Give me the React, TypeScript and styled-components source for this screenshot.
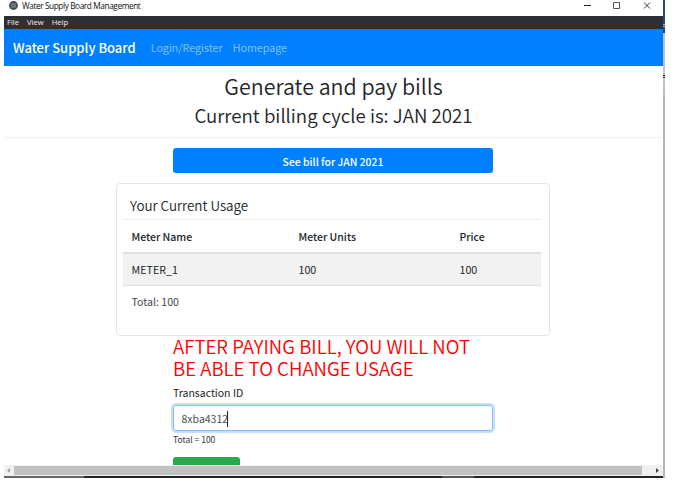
import React from "react";
import styled, { createGlobalStyle } from "styled-components";

const Global = createGlobalStyle`
  * { box-sizing: border-box; }
  html, body { margin: 0; background: #fff; overflow: hidden; }
  body { font-family: "Noto Sans CJK SC", "Noto Sans", sans-serif; color: #212529; }
  h1, h2, h3, p { margin: 0; font-weight: 400; }
`;

const Screen = styled.div`
  width: 686px;
  height: 495px;
  padding-left: 4px;
  display: flex;
  align-items: flex-start;
`;

const Window = styled.div`
  width: 659px;
  height: 478px;
  display: flex;
  flex-direction: column;
  overflow: hidden;
`;

const Text = styled.span<{ $size: number; $spacing?: number; $weight?: number }>`
  display: block;
  font-size: ${(p) => p.$size}px;
  letter-spacing: ${(p) => p.$spacing ?? 0}px;
  font-weight: ${(p) => p.$weight ?? 400};
  white-space: nowrap;
`;

const TitleBar = styled.header`
  height: 16px;
  flex: none;
  display: flex;
  padding: 0 11px 0 5px;
  font-family: "Open Sans", sans-serif;
  line-height: 12px;
  color: #111;
`;

const AppIcon = styled.svg`
  width: 9px;
  height: 9px;
  margin: 1px 4px 0 0;
`;

const WindowControls = styled.svg`
  width: 68px;
  height: 12px;
  margin-left: auto;
`;

const MenuBar = styled.nav`
  height: 13px;
  flex: none;
  display: flex;
  gap: 8px;
  padding-left: 3px;
  background: #2d2f34;
  color: #f2f2f2;
  font-family: "Open Sans", sans-serif;
  line-height: 13px;
`;

const NavBar = styled.nav`
  height: 37px;
  flex: none;
  display: flex;
  align-items: center;
  padding-left: 9px;
  background: #0080ff;
  color: #fff;
  line-height: 36px;
`;

const NavLinks = styled.div`
  display: flex;
  gap: 10px;
  margin-left: 15px;
  color: #80c0ff;
`;

const Page = styled.main`
  height: 399px;
  flex: none;
  overflow: hidden;
  display: flex;
  flex-direction: column;
`;

const Hero = styled.section`
  height: 72px;
  flex: none;
  padding-top: 5px;
  border-bottom: 1px solid #f0f0f0;
  display: flex;
  flex-direction: column;
  align-items: center;
`;

const HeroLine = styled.h1`
  height: 29px;
  line-height: 30px;
`;

const BillButton = styled.button`
  width: 320px;
  height: 25px;
  flex: none;
  margin: 10px 0 10px 169px;
  padding: 1px 0 0;
  border: 0;
  border-radius: 3px;
  background: #0080ff;
  color: #fff;
  font-family: inherit;
  line-height: 23px;
`;

const Card = styled.section`
  width: 434px;
  height: 153px;
  flex: none;
  margin-left: 112px;
  padding: 9px 8px 0 6px;
  border: 1px solid #e3e4e5;
  border-radius: 4px;
`;

const CardTitle = styled.h2`
  height: 26px;
  padding-left: 7px;
  line-height: 25px;
`;

const TableRow = styled.div<{ $height: number; $striped?: boolean }>`
  height: ${(p) => p.$height}px;
  display: grid;
  grid-template-columns: 167px 161px 1fr;
  align-items: center;
  padding-left: 8.5px;
  line-height: 19px;
  border-top: ${(p) => (p.$striped ? "2px" : "1px")} solid ${(p) => (p.$striped ? "#dee2e6" : "#ebedee")};
  ${(p) => p.$striped && "border-bottom: 1px solid #dee2e6; background: #f2f2f2;"}
`;

const TableTotal = styled.p`
  padding-left: 8.5px;
  line-height: 32px;
  color: #42474c;
`;

const Form = styled.form`
  width: 320px;
  margin-left: 169px;
  display: flex;
  flex-direction: column;
`;

const Warning = styled.h3`
  height: 44px;
  line-height: 22px;
  margin-top: -1px;
  margin-bottom: 1px;
  color: #f00;
`;

const Label = styled.label`
  height: 25px;
  line-height: 25px;
`;

const Field = styled.div`
  height: 26px;
  display: flex;
  align-items: center;
  padding: 1px 0 0 7.5px;
  border: 1px solid #80bdff;
  border-radius: 3px;
  box-shadow: 0 0 0 2px #c5e1ff;
  color: #495057;
  line-height: 24px;
`;

const Caret = styled.i`
  width: 1px;
  height: 16px;
  margin-left: -1px;
  background: #222;
`;

const Note = styled.p`
  height: 26px;
  line-height: 17px;
  color: #33383d;
`;

const PayButton = styled.button`
  width: 67px;
  height: 25px;
  border: 0;
  border-radius: 3px;
  background: #2aa84a;
`;

const ScrollBar = styled.div`
  height: 11px;
  flex: none;
  display: grid;
  grid-template-columns: 10px 628px 21px;
  background: #f0f0f0;
`;

const Thumb = styled.div`
  height: 9px;
  margin-top: 1px;
  background: #c2c2c2;
`;

const Arrow = styled.svg`
  width: 100%;
  height: 11px;
`;

const BottomEdge = styled.div`
  height: 2px;
  flex: none;
  display: grid;
  grid-template-columns: 80px 358px 32px 1fr;
  background: #222;
`;

const EdgeTone = styled.i<{ $color: string }>`
  background: ${(p) => p.$color};
`;

const DesktopEdge = styled.div`
  width: 2px;
  height: 478px;
  display: grid;
  grid-template-rows: 24px 1px 1px 1px 6px 42px 1px 1px 1px 16px 1fr;
`;

const desktopTones = ["#234c86", "#aebed3", "#234c86", "#aebed3", "#1c477f", "#c2c2c2", "#333", "#c2c2c2", "#333", "#c2c2c2", "#b6b6b6"];

export default function App() {
  return (
    <Screen>
      <Global />
      <Window>
        <TitleBar>
          <AppIcon viewBox="0 0 9 9">
            <circle cx="4.5" cy="4.5" r="4.4" fill="#394047" />
            <g fill="none" stroke="#7d949b" strokeWidth=".6">
              <ellipse cx="4.5" cy="4.5" rx="3" ry="1.2" transform="rotate(30 4.5 4.5)" />
              <ellipse cx="4.5" cy="4.5" rx="3" ry="1.2" transform="rotate(-30 4.5 4.5)" />
              <ellipse cx="4.5" cy="4.5" rx="1.2" ry="3" />
            </g>
          </AppIcon>
          <Text $size={8.3} $spacing={-0.42}>Water Supply Board Management</Text>
          <WindowControls viewBox="0 0 68 12" fill="none" stroke="#222">
            <path d="M0 5.5h7" />
            <path d="M29.5 2.5h6v6h-6z" stroke="#555" />
            <path d="M60 2.5l6 6m0-6l-6 6" strokeWidth=".9" />
          </WindowControls>
        </TitleBar>
        <MenuBar>
          <Text $size={7.6}>File</Text>
          <Text $size={7.6}>View</Text>
          <Text $size={7.6}>Help</Text>
        </MenuBar>
        <NavBar>
          <Text $size={13} $weight={500}>Water Supply Board</Text>
          <NavLinks>
            <Text $size={10.7}>Login/Register</Text>
            <Text $size={10.7}>Homepage</Text>
          </NavLinks>
        </NavBar>
        <Page>
          <Hero>
            <HeroLine><Text $size={21.4} $weight={350}>Generate and pay bills</Text></HeroLine>
            <HeroLine><Text $size={18.7} $weight={350}>Current billing cycle is: JAN 2021</Text></HeroLine>
          </Hero>
          <BillButton><Text $size={10.4} $weight={500}>See bill for JAN 2021</Text></BillButton>
          <Card>
            <CardTitle><Text $size={13.4} $weight={350}>Your Current Usage</Text></CardTitle>
            <TableRow $height={33}>
              <Text $size={10.5} $weight={500}>Meter Name</Text>
              <Text $size={10.5} $weight={500}>Meter Units</Text>
              <Text $size={10.5} $weight={500}>Price</Text>
            </TableRow>
            <TableRow $height={34} $striped>
              <Text $size={10.7}>METER_1</Text>
              <Text $size={10.7}>100</Text>
              <Text $size={10.7}>100</Text>
            </TableRow>
            <TableTotal><Text $size={10.6}>Total: 100</Text></TableTotal>
          </Card>
          <Form>
            <Warning>
              <Text $size={18.65} $weight={350}>
                AFTER PAYING BILL, YOU WILL NOT
                <br />
                BE ABLE TO CHANGE USAGE
              </Text>
            </Warning>
            <Label><Text $size={10.5}>Transaction ID</Text></Label>
            <Field>
              <Text $size={10.5}>8xba4312</Text>
              <Caret />
            </Field>
            <Note><Text $size={8.5}>Total = 100</Text></Note>
            <PayButton type="button" aria-label="Pay" />
          </Form>
        </Page>
        <ScrollBar>
          <Arrow viewBox="0 0 10 11"><path d="M6 3v5L3 5.5z" fill="#a0a0a0" /></Arrow>
          <Thumb />
          <Arrow viewBox="0 0 21 11"><path d="M14 3v5l3-2.5z" fill="#444" /></Arrow>
        </ScrollBar>
        <BottomEdge>
          <EdgeTone $color="#666" />
          <EdgeTone $color="#222" />
          <EdgeTone $color="#555" />
        </BottomEdge>
      </Window>
      <DesktopEdge>
        {desktopTones.map((tone, i) => <EdgeTone key={i} $color={tone} />)}
      </DesktopEdge>
    </Screen>
  );
}
